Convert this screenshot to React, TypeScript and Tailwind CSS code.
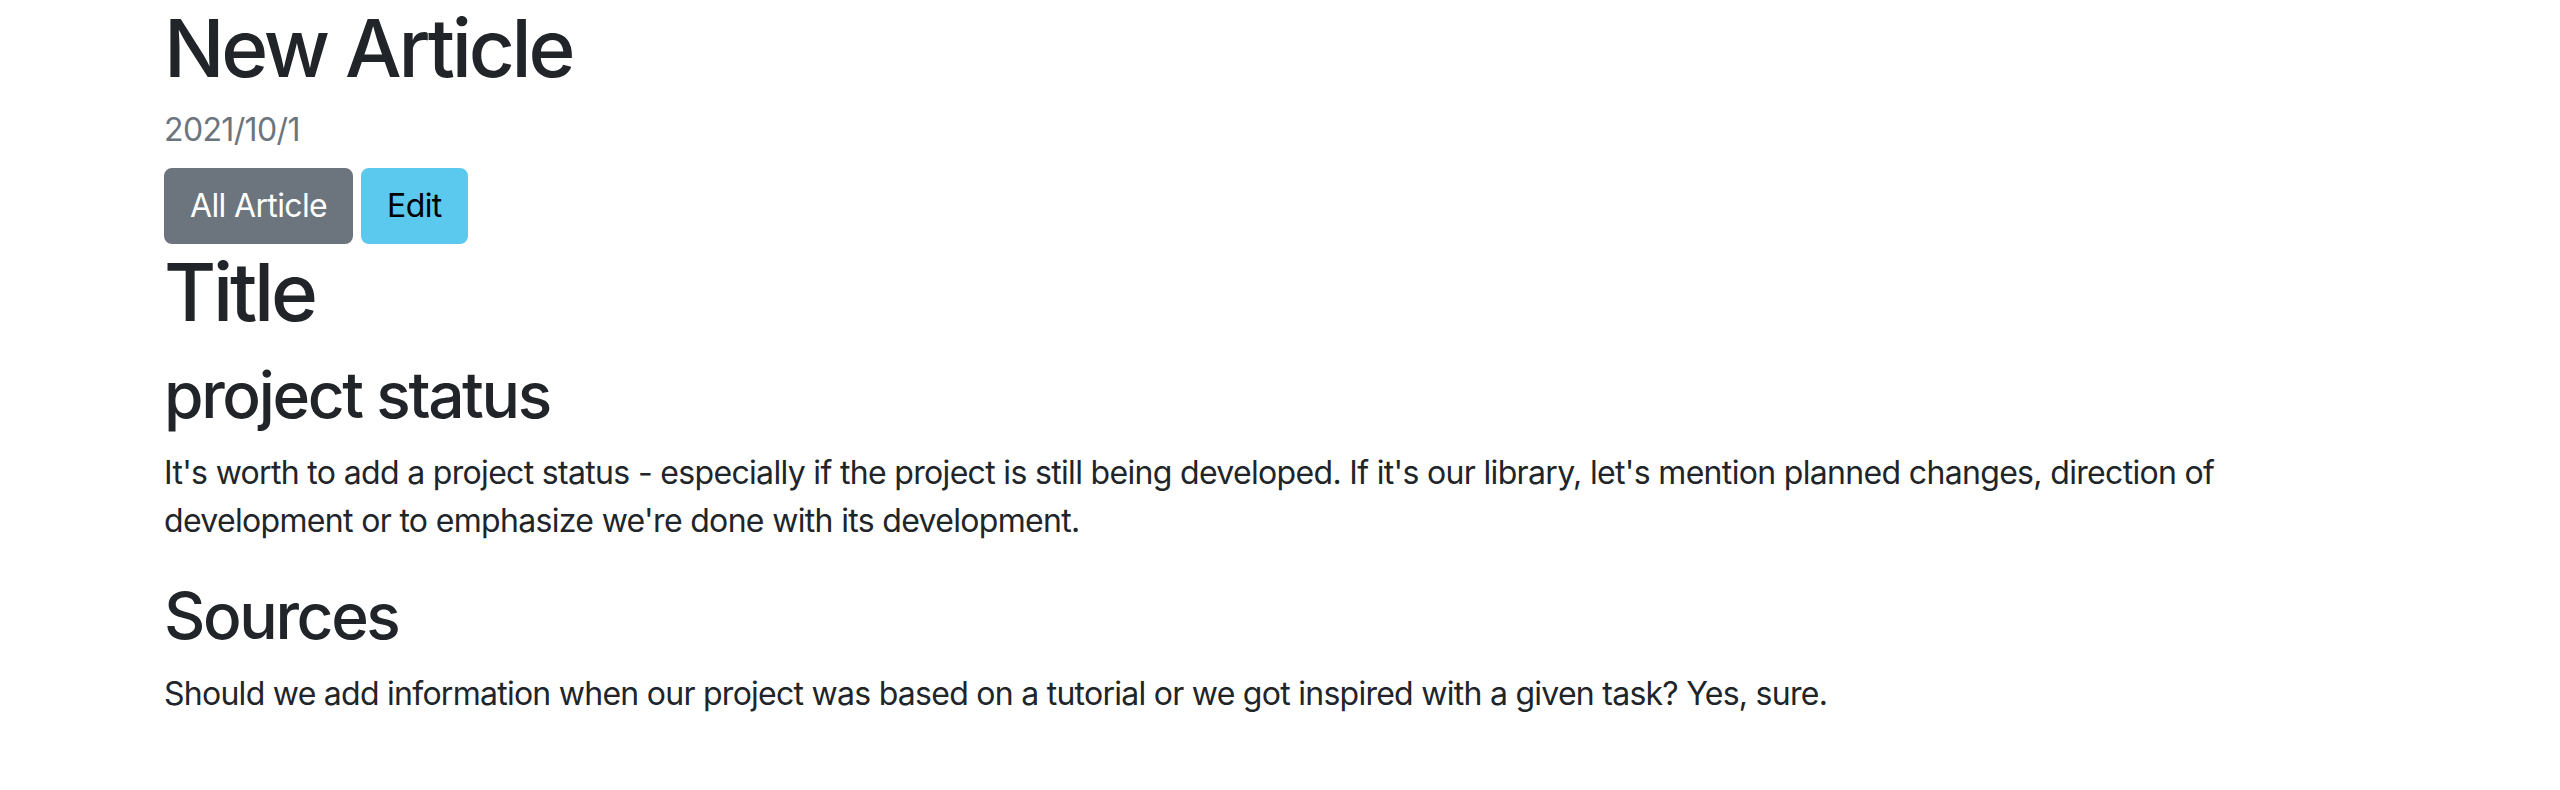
export default function App() {
  return (
    <div className="min-h-screen bg-white text-[#212529] font-['Inter','Liberation_Sans',sans-serif]">
      <div className="mx-auto max-w-[2280px] px-6">
        <h1 className="text-[80px] font-medium leading-[96px] tracking-[-0.04em] mb-[10px]">New Article</h1>
        <p className="text-[32px] leading-[48px] tracking-[-0.02em] text-[#6c757d] mb-[14px]">2021/10/1</p>
        <div className="flex gap-2">
          <button className="px-6 py-3 text-[32px] leading-[48px] tracking-[-0.02em] rounded-lg border-2 border-[#6c757d] bg-[#6c757d] text-white">
            All Article
          </button>
          <button className="px-6 py-3 text-[32px] leading-[48px] tracking-[-0.02em] rounded-lg border-2 border-[#5bc9ee] bg-[#5bc9ee] text-black">
            Edit
          </button>
        </div>
        <h1 className="text-[80px] font-medium leading-[96px] tracking-[-0.04em] mb-4">Title</h1>
        <h2 className="text-[64px] font-medium leading-[77px] tracking-[-0.037em] mb-4">project status</h2>
        <p className="text-[32px] leading-[48px] tracking-[-0.021em] mb-8">
          It's worth to add a project status - especially if the project is still being developed. If it's our library, let's mention planned changes, direction of development or to emphasize we're done with its development.
        </p>
        <h2 className="text-[64px] font-medium leading-[77px] tracking-[-0.037em] mb-4">Sources</h2>
        <p className="text-[32px] leading-[48px] tracking-[-0.023em] mb-8">
          Should we add information when our project was based on a tutorial or we got inspired with a given task? Yes, sure.
        </p>
      </div>
    </div>
  )
}
